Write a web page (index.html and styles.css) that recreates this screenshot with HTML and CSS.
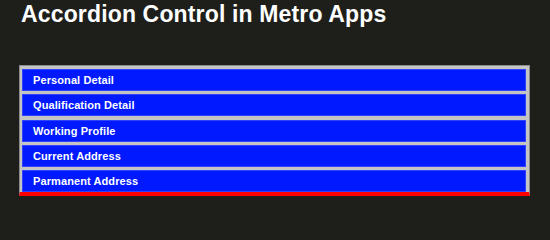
FILE: index.html
```html
<!DOCTYPE html>
<html>
<head>
<meta charset="utf-8">
<link rel="stylesheet" href="styles.css">
</head>
<body>
<h1 class="title">Accordion Control in Metro Apps</h1>
<div class="accordion">
  <div class="item">Personal Detail</div>
  <div class="item">Qualification Detail</div>
  <div class="item">Working Profile</div>
  <div class="item">Current Address</div>
  <div class="item">Parmanent Address</div>
</div>
</body>
</html>
```
FILE: styles.css
```css
html, body {
  margin: 0;
  padding: 0;
  background: #1e1f1b;
}
body {
  font-family: "Liberation Sans", Arial, sans-serif;
}
.title {
  margin: 2px 0 0 0;
  padding-left: 21px;
  font-size: 23px;
  letter-spacing: 0.15px;
  line-height: 25px;
  font-weight: bold;
  color: #ffffff;
}
.accordion {
  margin: 38px 0 0 19px;
  width: 511px;
  box-sizing: border-box;
  background: #c4c4c4;
  border: 1px solid #8c8c8c;
  border-bottom: 4px solid #ff0000;
  padding: 3px 3px 0 2px;
  display: flex;
  flex-direction: column;
  gap: 3.25px;
}
.item {
  height: 22px;
  box-sizing: border-box;
  background: #0019ff;
  border: 1px solid #2f43ff;
  color: #ffffff;
  font-size: 11px;
  letter-spacing: 0.1px;
  font-weight: bold;
  line-height: 20px;
  padding-left: 10px;
}
```
